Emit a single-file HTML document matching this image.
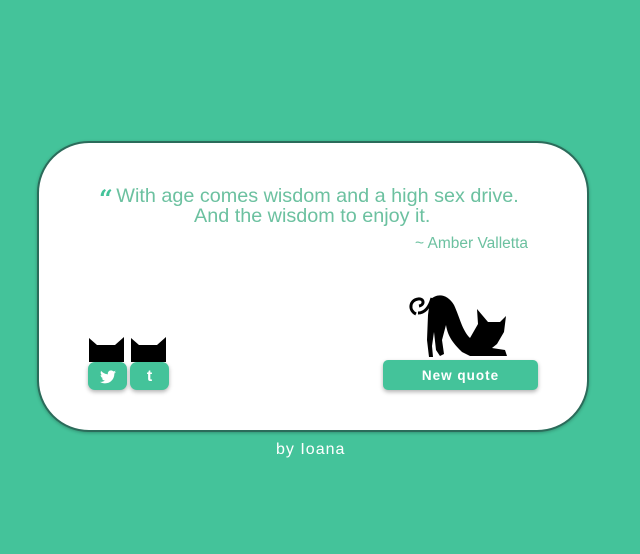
<!DOCTYPE html>
<html><head><meta charset="utf-8"><style>
html,body{margin:0;padding:0}
body{width:640px;height:554px;background:#44c39a;position:relative;overflow:hidden;font-family:"Liberation Sans",sans-serif}
.card{position:absolute;left:37px;top:141px;width:548px;height:287px;background:#fff;border:2px solid #2b6b5a;border-radius:52px;box-shadow:0 1px 3px rgba(0,0,0,.25)}
.q{position:absolute;color:#6cc1a0;font-size:19.8px;line-height:23px;white-space:nowrap}
.a{position:absolute;right:112px;top:235px;color:#6cc1a0;font-size:15.5px}
.btn{position:absolute;background:#44c39a;border-radius:5px;box-shadow:0 2px 4px rgba(0,0,0,.3);color:#fff;font-weight:bold;text-align:center}
.by{position:absolute;left:276px;top:441px;color:#fff;font-size:16px;letter-spacing:1px}
</style></head><body>
<div class="card"></div>
<div class="q" style="top:182px;left:99px"><span style="font-weight:bold;color:#44c39a;font-family:'DejaVu Serif',serif;font-size:24px;position:relative;top:5px;letter-spacing:-2px">&#8220;</span> With age comes wisdom and a high sex drive.</div>
<div class="q" style="top:205px;left:194px">And the wisdom to enjoy it.</div>
<div class="a">~ Amber Valletta</div>
<svg style="position:absolute;left:0;top:0" width="640" height="554">
<path d="M89 362 L89 338 L97 345 L115 345 L124 337 L124 362 Z" fill="#000"/>
<path d="M131 362 L131 338 L139 345 L157 345 L166 337 L166 362 Z" fill="#000"/>
<path d="M416 314 C408 310 410 300 418 299 C424 298 425 305 419 306" stroke="#000" stroke-width="3" fill="none"/>
<path d="M418 313 C426 313 430 305 432 298" stroke="#000" stroke-width="3" fill="none"/>
<path d="M430 300 C438 292 448 295 454 305 C460 318 462 330 470 338 L478 324 L477 309 L488 322 L500 322 L506 316 L504 332 L497 344 L492 348 L505 350 L507 356 L470 356 L462 352 C455 345 448 338 446 325 L442 340 L444 354 L440 356 L436 350 L434 332 L432 346 L433 357 L429 357 L427 340 L428 315 Z" fill="#000"/>
</svg>
<div class="btn" style="left:88px;top:362px;width:39px;height:28px;border-radius:7px"><svg width="16" height="14" viewBox="0 0 24 20" style="margin-top:8px"><path d="M24 2.4c-.9.4-1.8.7-2.8.8 1-.6 1.8-1.6 2.2-2.700-1 .6-2 1-3.1 1.2C19.3.7 18 0 16.6 0c-2.7 0-4.9 2.2-4.9 4.9 0 .4 0 .8.1 1.1C7.7 5.8 4.1 3.9 1.7.9c-.4.7-.7 1.6-.7 2.5 0 1.7.9 3.2 2.2 4.1-.8 0-1.6-.2-2.2-.6v.1c0 2.4 1.7 4.4 3.9 4.8-.4.1-.8.2-1.300.2-.3 0-.6 0-.9-.1.6 2 2.4 3.4 4.6 3.4-1.7 1.3-3.8 2.1-6.1 2.1-.4 0-.8 0-1.2-.1 2.2 1.4 4.8 2.2 7.5 2.2 9.1 0 14-7.5 14-14v-.6c1-.7 1.8-1.6 2.5-2.5z" fill="#fff"/></svg></div>
<div class="btn" style="left:130px;top:362px;width:39px;height:28px;border-radius:7px;font-size:16px;line-height:30px">t</div>
<div class="btn" style="left:383px;top:360px;width:155px;height:30px;font-size:13.5px;line-height:31px;letter-spacing:1px">New quote</div>
<div class="by">by Ioana</div>
</body></html>
